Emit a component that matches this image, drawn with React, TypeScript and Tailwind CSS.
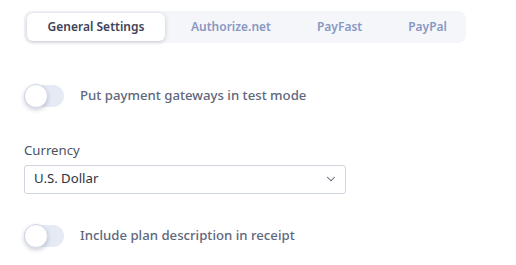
import { ChevronDown } from "lucide-react";

function Toggle({ label }: { label: string }) {
    return (
        <div className="flex items-center gap-[16px]">
            <div className="relative h-[22px] w-[40px] rounded-full bg-[#e6eaf4]">
                <span className="absolute left-0 top-[-1px] h-[24px] w-[24px] rounded-full border border-[#d0d6e6] bg-white shadow-[0_2px_4px_rgba(60,70,110,0.25)]" />
            </div>
            <span className="text-[13.2px] font-medium text-[#5e677c]">{label}</span>
        </div>
    );
}

export default function App() {
    const tabs = ["General Settings", "Authorize.net", "PayFast", "PayPal"];
    return (
        <div className="min-h-screen bg-white px-[24px] pt-[11px]" style={{ fontFamily: '"Noto Sans", "Open Sans", sans-serif' }}>
            <div className="flex h-[32px] w-[442px] items-center rounded-[8px] bg-[#f4f6fa] px-[3px]">
                {tabs.map((t, i) =>
                    i === 0 ? (
                        <div key={t} className="mr-[3px] flex h-[28px] w-[138px] shrink-0 items-center justify-center rounded-[6px] bg-white text-[12px] font-semibold text-[#3c4257] shadow-[0_1px_4px_rgba(50,60,90,0.25)]">
                            {t}
                        </div>
                    ) : (
                        <div key={t} className="flex h-[28px] shrink-0 items-center px-[23px] text-[12px] font-semibold text-[#8a97c2]">
                            {t}
                        </div>
                    )
                )}
            </div>

            <div className="mt-[42px]">
                <Toggle label="Put payment gateways in test mode" />
            </div>

            <div className="mt-[34px] text-[13.2px] text-[#4b5263]">Currency</div>
            <div className="mt-[4px] flex h-[29px] w-[322px] items-center justify-between rounded-[3px] border border-[#cfd5df] pl-[9px] pr-[7px] text-[13.2px] text-[#2f3443]">
                <span>U.S. Dollar</span>
                <ChevronDown size={14} strokeWidth={1.75} className="text-[#5b6170]" />
            </div>

            <div className="mt-[31px]">
                <Toggle label="Include plan description in receipt" />
            </div>
        </div>
    );
}
